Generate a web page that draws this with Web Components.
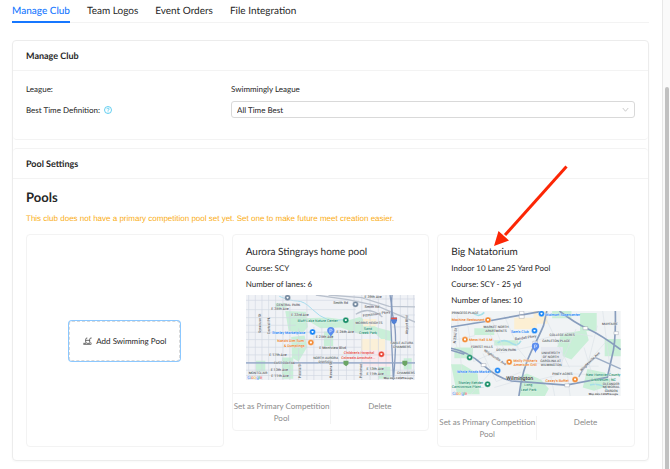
<!DOCTYPE html>
<html lang="en">
<head>
<meta charset="utf-8">
<meta name="viewport" content="width=device-width, initial-scale=1">
<title>Manage Club</title>
<style>
	html, body {
		height: 100%;
	}

	body {
		--line: #f3f3f3;
		--ink: #262626;
		margin: 0;
		overflow: hidden;
		background: #fff;
		color: var(--ink);
		font: 8px/16px "Lato", "Liberation Sans", sans-serif;
		text-rendering: geometricPrecision;
	}
</style>
</head>
<body>
<club-page>
	<tab-bar></tab-bar>
	<section-group>
		<section-card heading="Manage Club">
			<club-form></club-form>
		</section-card>
		<section-card heading="Pool Settings">
			<pool-list>
				<add-pool></add-pool>
				<pool-card id="aurora"></pool-card>
				<pool-card id="natatorium"></pool-card>
			</pool-list>
		</section-card>
	</section-group>
</club-page>

<script>
	// Small helper, every component here opens a shadow root and fills it
	function render(host, html) {
		if (!host.shadowRoot) host.attachShadow({ mode: 'open' });
		host.shadowRoot.innerHTML = html;
	}

	class ClubPage extends HTMLElement {
		constructor() {
			super();
			render(this, `
			<style>
				:host {
					display: flex;
					height: 100%;
					overflow: hidden;
				}
				main {
					flex: 1;
					min-width: 0;
					padding: 0 13px 0 12px;
				}
				.track {
					box-sizing: border-box;
					width: 8px;
					padding: 87px 1px 0 2px;
					border-left: 1px solid #e8e8e8;
					background: #fafafa;
					display: flex;
				}
				.thumb {
					flex: 1;
					border-radius: 3px 3px 0 0;
					background: #c1c1c1;
				}
			</style>
			<main><slot></slot></main>
			<div class="track"><div class="thumb"></div></div>`);
		}
	}
	customElements.define('club-page', ClubPage);

	class TabBar extends HTMLElement {
		constructor() {
			super();
			const tabs = ['Manage Club', 'Team Logos', 'Event Orders', 'File Integration'];
			render(this, `
			<style>
				:host {
					display: block;
				}
				nav {
					display: flex;
					gap: 17px;
					border-bottom: 1px solid var(--line);
				}
				button {
					margin: 0 0 -1px;
					padding: 3px 0 2px;
					border: 0;
					border-bottom: 2px solid transparent;
					background: none;
					color: inherit;
					font: inherit;
					font-size: 10px;
					text-rendering: inherit;
				}
				button[aria-selected="true"] {
					border-color: #1677ff;
					color: #1677ff;
					font-weight: 500;
				}
			</style>
			<nav role="tablist">
				${tabs.map((tab, i) => `<button role="tab" aria-selected="${i === 0}">${tab}</button>`).join('')}
			</nav>`);
		}
	}
	customElements.define('tab-bar', TabBar);

	class SectionGroup extends HTMLElement {
		constructor() {
			super();
			render(this, `
			<style>
				:host {
					display: flex;
					flex-direction: column;
					gap: 8px;
					margin-top: 17px;
					border: 1px solid #ececec;
					border-radius: 4px;
					box-shadow: 0 1px 2px rgba(0, 0, 0, 0.03);
				}
			</style>
			<slot></slot>`);
		}
	}
	customElements.define('section-group', SectionGroup);

	class SectionCard extends HTMLElement {
		connectedCallback() {
			render(this, `
			<style>
				:host {
					display: block;
					border-radius: 4px;
				}
				:host(:first-child) {
					border-bottom: 1px solid var(--line);
				}
				:host(:last-child) {
					border-top: 1px solid var(--line);
				}
				h2 {
					margin: 0;
					padding: 7px 13px 6px;
					border-bottom: 1px solid var(--line);
					font-size: 9px;
					font-weight: 700;
				}
				.body {
					padding: 10px 13px 13px;
				}
			</style>
			<h2>${this.getAttribute('heading')}</h2>
			<div class="body"><slot></slot></div>`);
		}
	}
	customElements.define('section-card', SectionCard);

	class ClubForm extends HTMLElement {
		constructor() {
			super();
			render(this, `
			<style>
				:host {
					display: block;
					padding-bottom: 8px;
				}
				.grid {
					display: grid;
					grid-template-columns: 1fr 2fr;
					gap: 4px 3px;
					align-items: center;
				}
				.name {
					display: flex;
					align-items: center;
					gap: 4px;
				}
				.help {
					width: 8px;
					height: 8px;
				}
				.field {
					display: grid;
					align-items: center;
				}
				.field > * {
					grid-area: 1 / 1;
				}
				select {
					appearance: none;
					box-sizing: border-box;
					width: 100%;
					height: 17px;
					padding: 0 5px;
					border: 1px solid #d9d9d9;
					border-radius: 3px;
					background: #fff;
					color: inherit;
					font: inherit;
					text-rendering: inherit;
				}
				.chevron {
					justify-self: end;
					width: 7px;
					height: 7px;
					margin-right: 6px;
					pointer-events: none;
				}
			</style>
			<div class="grid">
				<span>League:</span>
				<span>Swimmingly League</span>
				<div class="name">
					<label for="best">Best Time Definition:</label>
					<svg class="help" viewBox="0 0 16 16" fill="none" stroke="#3fc3ee" stroke-width="1.6">
						<circle cx="8" cy="8" r="7"/>
						<path d="M5.8 6.4c0-3 4.6-2.8 4.4 0c-.1 1.4-2.2 1.4-2.2 3.2M8 11v1.6"/>
					</svg>
				</div>
				<div class="field">
					<select id="best"><option>All Time Best</option></select>
					<svg class="chevron" viewBox="0 0 14 14" fill="none" stroke="#bfbfbf" stroke-width="1.6">
						<path d="M1.5 4L7 10.5L12.500 4"/>
					</svg>
				</div>
			</div>`);
		}
	}
	customElements.define('club-form', ClubForm);

	class PoolList extends HTMLElement {
		constructor() {
			super();
			render(this, `
			<style>
				:host {
					display: block;
				}
				h3 {
					margin: 0;
					font-size: 13px;
					font-weight: 700;
				}
				p {
					margin: 6px 0 7px;
					color: #faad14;
					font-family: "Liberation Sans", sans-serif;
				}
				.grid {
					display: grid;
					grid-template-columns: repeat(3, minmax(0, 1fr));
					gap: 8px;
					align-items: start;
				}
			</style>
			<h3>Pools</h3>
			<p>This club does not have a primary competition pool set yet. Set one to make future meet creation easier.</p>
			<div class="grid"><slot></slot></div>`);
		}
	}
	customElements.define('pool-list', PoolList);

	class AddPool extends HTMLElement {
		constructor() {
			super();
			render(this, `
			<style>
				:host {
					display: flex;
					align-self: stretch;
					align-items: center;
					justify-content: center;
					border: 1px solid var(--line);
					border-radius: 4px;
				}
				button {
					display: flex;
					align-items: center;
					gap: 4px;
					padding: 11px 13px;
					border: 1px dashed #d9d9d9;
					border-radius: 3px;
					box-shadow: 0 0 0 1px #8cc8ff;
					background: #fff;
					color: inherit;
					font: inherit;
					text-rendering: inherit;
				}
				svg {
					width: 9px;
					height: 8px;
				}
			</style>
			<button>
				<svg viewBox="0 0 27 24" fill="none" stroke="#262626" stroke-width="2">
					<path d="M8 17V7q0-4 4-4h1M20 17V7q0-4 4-4h2M8 10h12M1 19h7q2-3 5 0h7q2-3 6 0M1 22h24"/>
				</svg>
				Add Swimming Pool
			</button>`);
		}
	}
	customElements.define('add-pool', AddPool);

	// Static street maps, drawn at three units to the pixel
	const mapStyle = `
		:host { display: block; }
		svg { display: block; width: 100%; height: auto; }
		text { font: 500 11px "Roboto", "Liberation Sans", sans-serif; fill: #5f6368; stroke: #f4f6f8; stroke-width: 1px; paint-order: stroke; }
		.area { font-size: 10px; fill: #555b62; }
		.blue { fill: #1a83f8; }
		.orange { fill: #ef7c22; }
		.red { fill: #e8453c; }
		.green { fill: #24906f; }
		.city { font-size: 16px; fill: #333; }
		.google { font: 500 14px "Liberation Sans", sans-serif; }
		.legal { font-size: 8px; fill: #333; }`;

	const google = `<text class="google" x="4" y="253"><tspan fill="#4285f4">G</tspan><tspan fill="#ea4335">o</tspan><tspan fill="#fbbc05">o</tspan><tspan fill="#4285f4">g</tspan><tspan fill="#34a853">l</tspan><tspan fill="#ea4335">e</tspan></text>`;

	const pin = (x, y) => `<path d="M${x} ${y + 18}C${x - 2} ${y + 8} ${x - 11} ${y + 5} ${x - 11} ${y - 3}a11 11 0 0 1 22 0C${x + 11} ${y + 5} ${x + 2} ${y + 8} ${x} ${y + 18}z" fill="#5b8def"/><path d="M${x - 3} ${y + 3}v-10h3q4 0 4 3t-4 3h-3" fill="none" stroke="#dce8ff" stroke-width="2"/>`;

	const spot = (x, y, color) => `<circle cx="${x}" cy="${y}" r="9" fill="${color}" stroke="#fff" stroke-width="1"/><path d="M${x - 3} ${y - 3}h6v4q-3 4-6 0z" fill="#fff"/>`;

	const maps = {
		aurora: `
			<rect width="510" height="256" fill="#f0f2f6"/>
			<path d="M118 48l62 2 6 46-16 18-42-6zM174 70l72-2 62 8 34-10 52 32 40 10 4 30-30-4-22-20-50 2-52-18-60 2zM136 126l40-4 8 34-26 44-20-12zM88 24h34v14h-34zM30 198h28v32h-28zM108 188h34v64h-34zM234 110h28v44h-28zM398 216h36v36h-36zM474 190h24v34h-24z" fill="#c9efd8"/>
			<path d="M346 132h72v36h-72zM352 72h40v22h-40z" fill="#fbf0d8"/>
			<path d="M350 166h84v48h-84z" fill="#fbe9ed"/>
			<path d="M100 4q34 14 54 14t44 24 48 32 56-4" fill="none" stroke="#a5dced" stroke-width="3"/>
			<path d="M8 0V256M28 0V256M48 0V256M68 0V256M89 0V256M111 0V256M132 30V256M158 100V256M183 0V256M204 96V256M228 96V256M254 96V256M278 110V256M302 110V256M325 0V256M348 0V256M373 0V256M398 0V256M421 0V256M464 0V256M486 0V256M504 0V256M0 16H340M0 44H330M0 68H180M0 91H150M0 112H346M0 134H346M0 157H346M0 180H510M0 226H510M0 242H510M380 12H510M440 60H510M440 96H510" fill="none" stroke="#d2d8e2" stroke-width="2"/>
			<path d="M210 0l96 14 86 18 118 50M248 0l100 8 82 26 80 2M330 58q40-26 80 8" fill="none" stroke="#b9c1cd" stroke-width="4"/>
			<path d="M0 204H510M439 0q-4 42 6 82t-2 174M433 0q8 40 2 80l8 176" fill="none" stroke="#869bbd" stroke-width="4"/>
			<path d="M0 204H510" stroke="#a9b9d4" stroke-width="2"/>
			<text class="area" x="92" y="32">CENTRAL PARK</text>
			<text x="76" y="46">E 35th Ave</text>
			<text x="136" y="62">E 33rd Ave</text>
			<text x="356" y="10">E 39th Ave</text>
			<text x="262" y="28">Smith Rd</text>
			<text x="356" y="38">Smith Rd</text>
			<text x="352" y="66" transform="rotate(-8 352 66)">Fitzsimons Pkwy</text>
			<text class="green" x="155" y="82">Bluff Lake Nature Center</text>
			<text class="area" x="329" y="88">MORRIS HEIGHTS</text>
			<text class="green" x="354" y="104">Sand</text>
			<text class="green" x="340" y="118">Creek Park</text>
			<text class="blue" x="78" y="116">Stanley Marketplace</text>
			<text x="210" y="128">E 25th Ave</text>
			<text x="272" y="114">E 26th Ave</text>
			<text class="orange" x="94" y="142">Nana's Dim Sum</text>
			<text class="orange" x="114" y="156">&amp; Dumplings</text>
			<text x="220" y="161">E Montview Blvd</text>
			<text class="area" x="434" y="146">SABLE ALTURA</text>
			<text class="area" x="442" y="158">CHAMBERS</text>
			<text class="red" x="294" y="178">Children's Hospital</text>
			<text class="red" x="286" y="192">Colorado Anschutz...</text>
			<text x="70" y="184">E 17th Ave</text>
			<text class="area" x="202" y="191">NORTH AURORA</text>
			<text class="area" x="218" y="203">DIVISION</text>
			<text class="area" x="84" y="208">EAST COLFAX</text>
			<text x="74" y="227">E 13th Ave</text>
			<text x="76" y="246">E 11th Ave</text>
			<text class="area" x="8" y="236">MONTCLAIR</text>
			<text class="area" x="454" y="236">CHAMBERS</text>
			<text x="362" y="226">E 13th Ave</text>
			<text x="362" y="240">E 11th Ave</text>
			<text x="46" y="114" transform="rotate(-90 46 114)">Syracuse St</text>
			<text x="71" y="118" transform="rotate(-90 71 118)">Central Pk</text>
			<text x="164" y="250" transform="rotate(-90 164 250)">Peoria St</text>
			<text x="257" y="250" transform="rotate(-90 257 250)">Havana St</text>
			<text x="350" y="250" transform="rotate(-90 350 250)">Potomac</text>
			<text x="488" y="118" transform="rotate(-90 488 118)">Airport Blvd</text>
			${spot(125, 8, '#71869d')}${spot(329, 28, '#71869d')}
			${spot(300, 76, '#168d66')}${spot(200, 111, '#1683f5')}${spot(195, 143, '#f28b35')}${spot(407, 178, '#e94336')}
			<path d="M436 68h18v8q0 8-9 12q-9-4-9-12z" fill="#5180d5"/><path d="M436 68h18v5h-18z" fill="#e45548"/>
			<path d="M293 198h15v10l-7 6-8-6zM470 198h15v10l-7 6-8-6z" fill="#6ba565"/>
			${pin(255, 110)}${google}
			<text class="legal" x="414" y="253">Map data ©2025 Google</text>`,
		natatorium: `
			<rect width="510" height="256" fill="#f0f3f5"/>
			<path d="M70 52h60v20H70zM130 88h72v16h-72zM10 110h56v32H10zM330 70l76-14 8 32-52 58-48-18zM388 6h50v54h-50zM0 160h34l46 28 6 62H18zM206 198l22-10 42 18 24 28-12 22h-74zM304 0h58v22h-58zM462 84h48v52h-48zM410 174l54 12 20 36-54 18-34-10z" fill="#c9efd7"/>
			<path d="M190 20h68v34h-68zM248 0h42v38h-42z" fill="#fcefd3"/>
			<path d="M270 108h66v56h-66z" fill="#e7eaf1"/>
			<path d="M140 96q20-14 40 0t30-6M418 222q34-8 54 18M64 4q20 18 36 0" fill="none" stroke="#a6dfe8" stroke-width="5"/>
			<path d="M18 0l20 256M50 40l70-20 38 92-90 40zM96 128l40 84 74-28M60 250l70-78M106 52l44 74 94-20M160 14l42 96M196 106l42 52 74-2M258 88l92-24 76 12M284 20l72 150M324 166h120M376 54l-50 116M400 110l44 146M440 44l-30 120M468 90l-80 90M456 0l28 216M250 210l88-22 102 4M130 230l76-22M300 196l12 60M350 190l8 66M0 90l72-16M0 38l18 72" fill="none" stroke="#dde2e9" stroke-width="2"/>
			<path d="M0 48l112-18L272 1M0 112q52 10 96 50t86 48l164 13 124-24 14-62q12-42 10-137M204 256q10-80 38-136t36-76L288 0M326 0q46 36 86 54t98 62M0 118l40 12" fill="none" stroke="#889dbd" stroke-width="5"/>
			<path d="M384 198q20-40 50-58l76 34" fill="none" stroke="#9daec6" stroke-width="4"/>
			<text class="area" x="2" y="9">PRINCESS PLACE</text>
			<text class="blue" x="284" y="14">Walmart Supercenter</text>
			<text class="orange" x="2" y="31">Machine Restaurant</text>
			<text class="area" x="98" y="52">MARKET NORTH</text>
			<text class="area" x="103" y="64">APARTMENTS</text>
			<text class="blue" x="180" y="65">Sam's Club</text>
			<text class="area" x="296" y="74">COLLEGE ACRES</text>
			<text class="area" x="274" y="93">CARLETON PLACE</text>
			<text class="area" x="454" y="42">MAYFAIRE</text>
			<text class="orange" x="54" y="91">Mess Hall ILM</text>
			<text class="area" x="60" y="111">FOREST HILLS</text>
			<text class="area" x="136" y="120">DEVON PARK</text>
			<text class="area" x="272" y="128">UNIVERSITY</text>
			<text class="area" x="276" y="140">OF NORTH</text>
			<text class="area" x="268" y="152">CAROLINA AT</text>
			<text class="area" x="270" y="164">WILMINGTON</text>
			<text class="orange" x="188" y="152">Molly Pitcher's</text>
			<text class="orange" x="188" y="166">American Grill</text>
			<text class="blue" x="18" y="185">Whole Foods Market</text>
			<text class="city" x="166" y="208">Wilmington</text>
			<text class="area" x="304" y="192">PINEY ACRES</text>
			<text class="orange" x="284" y="213">Casey's Buffet</text>
			<text class="green" x="22" y="218">Stanley Rehder</text>
			<text class="green" x="2" y="232">Carnivorous Plant...</text>
			<text class="green" x="220" y="225">Long</text>
			<text class="green" x="210" y="239">Leaf Park</text>
			<text class="green" x="406" y="196">New Hanover County</text>
			<text class="green" x="420" y="209">Arboretum | NC</text>
			<text class="area" x="456" y="221">OLEANDER</text>
			<text class="area" x="456" y="232">MEMORIAL</text>
			<text class="area" x="462" y="243">GARDEN</text>
			<text x="14" y="98" transform="rotate(-85 14 98)">N 23rd St</text>
			<text x="192" y="88" transform="rotate(-8 192 88)">Randall Pkwy</text>
			<text x="98" y="120" transform="rotate(34 98 120)">Wrightsville Ave</text>
			<text x="392" y="182" transform="rotate(-44 392 182)">Wrightsville Ave</text>
			${spot(272, 8, '#1683f5')}${spot(111, 27, '#f28b35')}${spot(251, 59, '#1683f5')}${spot(42, 86, '#f28b35')}
			${spot(56, 140, '#168d66')}${spot(175, 153, '#f28b35')}${spot(140, 179, '#1683f5')}${spot(110, 220, '#168d66')}${spot(373, 206, '#f28b35')}
			<path d="M206 1h13v9h-13zM205 13h15v9h-15zM397 47h14v9h-14zM490 62h13v9h-13zM91 158h14v9H91zM342 219h14v9h-14zM246 91h14v9h-14z" fill="#fff" stroke="#7b8797" stroke-width="1"/>
			${pin(254, 109)}${google}
			<text class="legal" x="414" y="253">Map data ©2025 Google</text>`
	};

	class PoolMap extends HTMLElement {
		connectedCallback() {
			render(this, `
			<style>${mapStyle}</style>
			<svg viewBox="0 0 510 256">${maps[this.getAttribute('area')]}</svg>`);
		}
	}
	customElements.define('pool-map', PoolMap);

	class PoolCard extends HTMLElement {
		/**
		 * @param {Object} data - { title, details: [string], arrow: boolean }
		 */
		set data(data) {
			render(this, `
			<style>
				:host {
					display: block;
					position: relative;
					border: 1px solid var(--line);
					border-radius: 4px;
				}
				.body {
					padding: 9px 13px 13px;
				}
				h4, p {
					margin: 0;
					font-weight: 400;
				}
				h4 {
					font-size: 10px;
				}
				pool-map {
					margin-top: 3px;
				}
				.actions {
					display: grid;
					grid-template-columns: 1fr 1fr;
					padding: 6px 0;
					border-top: 1px solid var(--line);
				}
				button {
					display: flex;
					justify-content: center;
					padding: 0;
					border: 0;
					background: none;
					color: #8c8c8c;
					font: inherit;
					line-height: 12px;
					text-rendering: inherit;
				}
				button + button {
					border-left: 1px solid var(--line);
				}
				/* callout arrow, lies over the sections above the card */
				.arrow {
					position: absolute;
					left: 56px;
					bottom: 100%;
					width: 76px;
					height: 84px;
					margin-bottom: -12px;
					pointer-events: none;
				}
			</style>
			<div class="body">
				<h4>${data.title}</h4>
				${data.details.map(line => `<p>${line}</p>`).join('')}
				<pool-map area="${this.id}"></pool-map>
			</div>
			<div class="actions">
				<button>Set as Primary Competition Pool</button>
				<button>Delete</button>
			</div>
			${data.arrow ? `
			<svg class="arrow" viewBox="0 0 76 84">
				<path d="M72.500 3.500L11 72" stroke="#fc2605" stroke-width="3"/>
				<path d="M0 83L4.500 68L15 77.500z" fill="#fc2605"/>
			</svg>` : ''}`);
		}
	}
	customElements.define('pool-card', PoolCard);

	document.querySelector('#aurora').data = {
		title: 'Aurora Stingrays home pool',
		details: ['Course: SCY', 'Number of lanes: 6']
	};
	document.querySelector('#natatorium').data = {
		title: 'Big Natatorium',
		details: ['Indoor 10 Lane 25 Yard Pool', 'Course: SCY - 25 yd', 'Number of lanes: 10'],
		arrow: true
	};
</script>
</body>
</html>
